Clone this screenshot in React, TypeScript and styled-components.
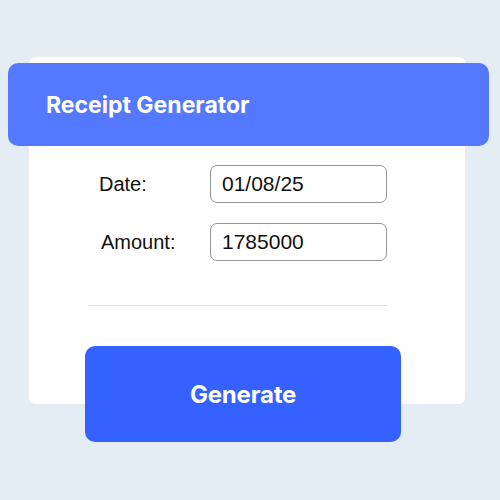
import styled, { createGlobalStyle } from 'styled-components'

const GlobalStyle = createGlobalStyle`
  html, body {
    margin: 0;
    padding: 0;
    background: #E4EDF3;
  }
  body {
    width: 500px;
    height: 500px;
    overflow: hidden;
  }
`

const Page = styled.div`
  padding: 57px 0 0 29px;
`

const Card = styled.div`
  width: 436px;
  background: #FFFFFF;
  border-radius: 6px;
  padding: 6px 0 0;
  box-sizing: border-box;
  height: 347px;
`

const Header = styled.div`
  margin: 0 -24px 0 -21px;
  height: 83px;
  background: #5479FF;
  border-radius: 10px;
  display: flex;
  align-items: center;
  padding-left: 38px;
  box-sizing: border-box;
  h1 {
    margin: 0;
    font-family: Inter, 'Noto Sans', sans-serif;
    font-weight: 700;
    font-size: 23px;
    letter-spacing: 0;
    color: #FFFFFF;
  }
`

const Form = styled.div`
  margin: 19px 0 0 59px;
  width: 299px;
  display: flex;
  flex-direction: column;
  gap: 20px;
`

const Row = styled.label`
  display: flex;
  align-items: center;
  font-family: 'Liberation Sans', Arial, sans-serif;
  font-size: 20px;
  color: #111;
`

const Label = styled.span<{ $indent: number }>`
  width: 122px;
  padding-left: ${({ $indent }) => $indent}px;
  box-sizing: border-box;
`

const Input = styled.div`
  width: 177px;
  height: 38px;
  border: 1px solid #959595;
  border-radius: 7px;
  box-sizing: border-box;
  display: flex;
  align-items: center;
  padding-left: 11px;
  font-size: 21px;
  color: #111;
`

const Divider = styled.hr`
  margin: 44px 0 0 59px;
  width: 299px;
  border: none;
  border-top: 1px solid #E0E0E0;
`

const GenerateButton = styled.button`
  display: flex;
  align-items: center;
  justify-content: center;
  margin: 40px 0 0 56px;
  width: 316px;
  height: 96px;
  border: none;
  border-radius: 10px;
  background: #3461FF;
  color: #FFFFFF;
  font-family: Inter, 'Noto Sans', sans-serif;
  font-weight: 700;
  font-size: 24px;
  letter-spacing: -0.2px;
  cursor: pointer;
`

const fields = [
  { label: 'Date:', value: '01/08/25', indent: 11 },
  { label: 'Amount:', value: '1785000', indent: 13 },
]

export default function App() {
  return (
    <Page>
      <GlobalStyle />
      <Card>
        <Header>
          <h1>Receipt Generator</h1>
        </Header>
        <Form>
          {fields.map((f) => (
            <Row key={f.label}>
              <Label $indent={f.indent}>{f.label}</Label>
              <Input>{f.value}</Input>
            </Row>
          ))}
        </Form>
        <Divider />
        <GenerateButton>Generate</GenerateButton>
      </Card>
    </Page>
  )
}
